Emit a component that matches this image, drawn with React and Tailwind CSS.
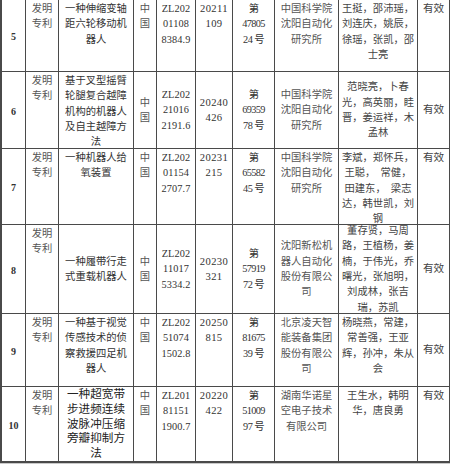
import React from "react";

const T = "t";
const M = "m";

const rows = [
  {
    n: "5",
    cells: [
      [T, ["发明", "专利"]],
      [T, ["一种伸缩变轴", "距六轮移动机", "器人"]],
      [T, ["中", "国"]],
      [T, ["ZL202", "01108", "8384.9"]],
      [T, ["20211", "109"]],
      [T, ["第", "47805", "24 号"]],
      [T, ["中国科学院", "沈阳自动化", "研究所"]],
      [T, ["王挺，邵沛瑶，", "刘连庆，姚辰，", "徐瑶，张凯，邵", "士亮"]],
      [T, ["有效"]],
    ],
  },
  {
    n: "6",
    cells: [
      [T, ["发明", "专利"]],
      [T, ["基于叉型摇臂", "轮腿复合越障", "机构的机器人", "及自主越障方", "法"]],
      [M, ["中", "国"]],
      [M, ["ZL202", "21016", "2191.6"]],
      [M, ["20240", "426"]],
      [M, ["第", "69359", "78 号"]],
      [M, ["中国科学院", "沈阳自动化", "研究所"]],
      [M, ["范晓亮，卜春", "光，高英丽，眭", "晋，姜运祥，木", "孟林"]],
      [M, ["有效"]],
    ],
  },
  {
    n: "7",
    cells: [
      [T, ["发明", "专利"]],
      [T, ["一种机器人给", "氧装置"]],
      [T, ["中", "国"]],
      [T, ["ZL202", "01154", "2707.7"]],
      [T, ["20231", "215"]],
      [T, ["第", "65582", "45 号"]],
      [T, ["中国科学院", "沈阳自动化", "研究所"]],
      [T, ["李斌，郑怀兵，", "王聪，  常健，", "田建东，  梁志", "达，韩世凯，刘", "钢"]],
      [T, ["有效"]],
    ],
  },
  {
    n: "8",
    cells: [
      [T, ["发明", "专利"]],
      [M, ["一种履带行走", "式重载机器人"]],
      [M, ["中", "国"]],
      [M, ["ZL202", "11017", "5334.2"]],
      [M, ["20230", "321"]],
      [M, ["第", "57919", "72 号"]],
      [M, ["沈阳新松机", "器人自动化", "股份有限公", "司"]],
      [M, ["董存贤，马周", "路，王植杨，姜", "楠，于伟光，乔", "曙光，张旭明，", "刘成林，张吉", "瑞，苏凯"]],
      [M, ["有效"]],
    ],
  },
  {
    n: "9",
    cells: [
      [T, ["发明", "专利"]],
      [T, ["一种基于视觉", "传感技术的侦", "察救援四足机", "器人"]],
      [T, ["中", "国"]],
      [T, ["ZL202", "51074", "1502.8"]],
      [T, ["20250", "815"]],
      [T, ["第", "81675", "39 号"]],
      [T, ["北京凌天智", "能装备集团", "股份有限公", "司"]],
      [T, ["杨晓燕，常建，", "常善强，王亚", "辉，孙冲，朱从", "会"]],
      [M, ["有效"]],
    ],
  },
  {
    n: "10",
    cells: [
      [T, ["发明", "专利"]],
      [T, ["一种超宽带", "步进频连续", "波脉冲压缩", "旁瓣抑制方", "法"], true],
      [T, ["中", "国"]],
      [T, ["ZL201", "81151", "1900.7"]],
      [T, ["20220", "422"]],
      [T, ["第", "51009", "97 号"]],
      [T, ["湖南华诺星", "空电子技术", "有限公司"]],
      [T, ["王生水，韩明", "华，唐良勇"]],
      [T, ["有效"]],
    ],
  },
];

const colText = [
  "text-[10.3px] text-[#555]",
  "text-[10.3px]",
  "text-[10.3px] text-[#555]",
  "text-[10.3px] tracking-[0.1px]",
  "text-[10.6px] tracking-[0.4px]",
  "text-[10.3px] tracking-[-0.6px]",
  "text-[10.3px] text-[#555]",
  "text-[10.3px] text-[#444]",
  "text-[10.6px] text-[#444]",
];

function Cell({ v, lines, big, ci }) {
  const align = v === M ? "justify-center" : "justify-start pt-px";
  const size = big
    ? "text-[11.6px] leading-[14.8px] text-[#222]"
    : `${colText[ci]} leading-[15.3px]`;
  return (
    <div className={`bg-white flex flex-col items-center overflow-hidden ${align} ${size}`}>
      {lines.map((l, i) => (
        <div key={i} className="whitespace-pre text-center">
          {l}
        </div>
      ))}
    </div>
  );
}

export default function App() {
  return (
    <div className="w-[450px] h-[464px] bg-[#c9c9c9] overflow-hidden [font-family:'Liberation_Serif','Noto_Sans_CJK_SC',serif] text-[#333]">
      <div className="bg-[#4a4a4a] pl-[2px] pr-px pb-[2px]">
        <div className="grid grid-cols-[23px_32px_74px_22px_38px_36px_41px_63px_78px_31px] grid-rows-[71px_76px_75px_88px_72px_74px] gap-px">
          {rows.map((r) => (
            <React.Fragment key={r.n}>
              <div className="bg-white flex items-center justify-center pt-[2px] text-[10px] font-bold text-[#333]">
                {r.n}
              </div>
              {r.cells.map((c, ci) => (
                <Cell key={ci} v={c[0]} lines={c[1]} big={c[2]} ci={ci} />
              ))}
            </React.Fragment>
          ))}
        </div>
      </div>
    </div>
  );
}
